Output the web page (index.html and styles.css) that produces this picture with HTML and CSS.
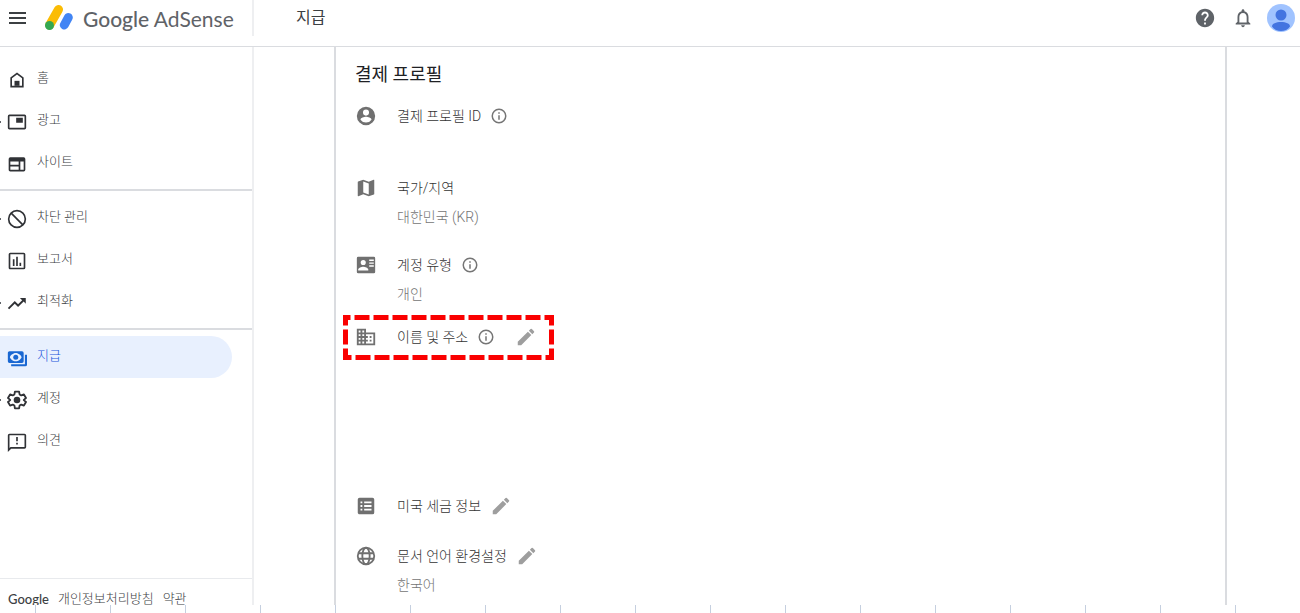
FILE: index.html
```html
<!DOCTYPE html>
<html lang="ko">
<head>
    <meta charset="UTF-8">
    <meta name="viewport" content="width=device-width, initial-scale=1.0">
    <title>Google AdSense - 지급</title>
    <link rel="stylesheet" href="styles.css">
</head>
<body>
    <header class="header">
        <div class="brand">
            <button class="icon-button" aria-label="메뉴">
                <svg class="menu-icon" viewBox="0 0 18 14"><path d="M0 1h17v2H0zM0 6h17v2H0zM0 11h17v2H0z"/></svg>
            </button>
            <a class="logo" href="#">
                <svg class="logo-mark" viewBox="0 0 28 26">
                    <path d="M13.500 4.500 4.700 20" stroke="#fbbc04" stroke-width="9" stroke-linecap="round"/>
                    <path d="M23.300 12.500 19.300 20" stroke="#4285f4" stroke-width="9" stroke-linecap="round"/>
                    <circle cx="4.500" cy="20.500" r="4.500" fill="#34a853"/>
                </svg>
                <span class="logo-text"><b>Google</b> AdSense</span>
            </a>
        </div>
        <h1>지급</h1>
        <div class="header-actions">
            <button class="icon-button" aria-label="도움말">
                <svg class="icon" viewBox="0 0 24 24"><path d="M12 2C6.480 2 2 6.480 2 12s4.480 10 10 10 10-4.480 10-10S17.520 2 12 2zm1 17h-2v-2h2v2zm2.070-7.750-.9.920C13.450 12.900 13 13.500 13 15h-2v-.5c0-1.100.45-2.100 1.170-2.830l1.240-1.260c.37-.36.59-.86.59-1.410 0-1.100-.9-2-2-2s-2 .9-2 2H8c0-2.210 1.790-4 4-4s4 1.790 4 4c0 .88-.36 1.680-.93 2.250z"/></svg>
            </button>
            <button class="icon-button" aria-label="알림">
                <svg class="icon" viewBox="0 0 24 24"><path d="M12 22c1.100 0 2-.9 2-2h-4c0 1.100.9 2 2 2zm6-6v-5c0-3.070-1.630-5.640-4.500-6.320V4c0-.83-.67-1.500-1.500-1.500s-1.500.67-1.500 1.500v.68C7.640 5.360 6 7.920 6 11v5l-2 2v1h16v-1l-2-2zm-2 1H8v-6c0-2.480 1.510-4.500 4-4.500s4 2.020 4 4.500v6z"/></svg>
            </button>
            <button class="icon-button" aria-label="계정">
                <svg class="avatar" viewBox="0 0 28 28">
                    <circle cx="14" cy="14" r="14" fill="#a0c3ff"/>
                    <circle cx="14" cy="11" r="5.500" fill="#4374e0"/>
                    <path d="M5 22.500c0-3 4-4.500 9-4.500s9 1.500 9 4.500c-2 3-5.500 4.500-9 4.500s-7-1.500-9-4.500z" fill="#4374e0"/>
                </svg>
            </button>
        </div>
    </header>

    <div class="page">
        <aside class="sidebar">
            <nav>
                <ul class="nav-group">
                    <li><a href="#"><svg class="icon" viewBox="0 0 24 24"><path d="M12 3 4 9v12h16V9l-8-6zm6 16H6v-9l6-4.500 6 4.500v9z"/><path d="M9 13h6v6H9z"/></svg><span>홈</span></a></li>
                    <li><a class="has-sub" href="#"><svg class="icon" viewBox="0 0 24 24"><path d="M21 3H3a2 2 0 0 0-2 2v14c0 1.100.9 2 2 2h18a2 2 0 0 0 2-2V5a2 2 0 0 0-2-2zm0 16H3V5h18v14zM11 7h8v6h-8z"/></svg><span>광고</span></a></li>
                    <li><a href="#"><svg class="icon" viewBox="0 0 24 24"><path d="M20 4H4a2 2 0 0 0-2 2v13c0 1.100.9 2 2 2h16a2 2 0 0 0 2-2V6a2 2 0 0 0-2-2zM4 9h10v4H4V9zm0 6h10v4H4v-4zm16 4h-4V9h4v10z"/></svg><span>사이트</span></a></li>
                </ul>
                <ul class="nav-group">
                    <li><a class="has-sub" href="#"><svg class="icon" viewBox="0 0 24 24"><g fill="none" stroke="currentColor" stroke-width="2"><circle cx="12" cy="12" r="10"/><path d="m5 5 14 14"/></g></svg><span>차단 관리</span></a></li>
                    <li><a href="#"><svg class="icon" viewBox="0 0 24 24"><path d="M20 2H4a2 2 0 0 0-2 2v16c0 1.100.9 2 2 2h16a2 2 0 0 0 2-2V4a2 2 0 0 0-2-2zm0 18H4V4h16v16zM7 10h2v8H7zM11 7h2v11h-2zM15 14h2v4h-2z"/></svg><span>보고서</span></a></li>
                    <li><a class="has-sub" href="#"><svg class="icon" viewBox="0 0 24 24"><path d="M15.500 6l2.700 2.700-4.900 4.900-4-4L1 18l1.600 1.600 6.700-6.800 4 4 6.700-6.500L22.500 13V6z"/></svg><span>최적화</span></a></li>
                </ul>
                <ul class="nav-group">
                    <li><a class="active" href="#"><svg class="icon" viewBox="0 0 24 24"><path fill-rule="evenodd" d="M3 4h15a2 2 0 0 1 2 2v10a2 2 0 0 1-2 2H3a2 2 0 0 1-2-2V6c0-1.100.9-2 2-2zm7.500 2C7 6 4 9 3.500 11c.5 2 3.500 5 7 5s6.500-3 7-5c-.5-2-3.500-5-7-5z"/><circle cx="10.500" cy="11" r="3"/><path d="M21.500 8H24v12a2 2 0 0 1-2 2H5v-2.500h16.500z"/></svg><span>지급</span></a></li>
                    <li><a class="has-sub" href="#"><svg class="icon" viewBox="0 0 24 24"><path d="M9.500 2h5l.6 3.300 2 1.200 3.200-1.200 2.500 4.300-2.600 2.200v.4l2.600 2.200-2.500 4.300-3.200-1.200-2 1.200-.6 3.300h-5l-.6-3.300-2-1.200-3.200 1.200-2.500-4.300 2.600-2.200v-.4L1.200 9.600l2.500-4.300 3.200 1.200 2-1.200z" fill="none" stroke="currentColor" stroke-width="2.200" stroke-linejoin="round"/><circle cx="12" cy="12" r="4"/></svg><span>계정</span></a></li>
                    <li><a href="#"><svg class="icon" viewBox="0 0 24 24"><path d="M21 2H3a2 2 0 0 0-2 2v20l4-4h16a2 2 0 0 0 2-2V4a2 2 0 0 0-2-2zm0 16H4.200L3 19.200V4h18v14zM11 6h2v5h-2zM11 13h2v2h-2z"/></svg><span>의견</span></a></li>
                </ul>
            </nav>
            <footer class="sidebar-footer">
                <span class="footer-logo">Google</span>
                <a href="#">개인정보처리방침</a>
                <a href="#">약관</a>
            </footer>
        </aside>

        <main class="content">
            <section class="card">
                <h2>결제 프로필</h2>

                <div class="field field-id">
                    <svg class="icon" viewBox="0 0 24 24"><path d="M12 2a10 10 0 1 0 0 20 10 10 0 0 0 0-20zm0 3a3.300 3.300 0 1 1 0 6.600A3.300 3.300 0 0 1 12 5zm0 14.200a7.200 7.200 0 0 1-6-3.200c0-2 4-3.100 6-3.100s6 1.100 6 3.100a7.200 7.200 0 0 1-6 3.200z"/></svg>
                    <div class="field-label"><span>결제 프로필 ID</span>
                        <button class="icon-button" aria-label="정보"><svg class="info" viewBox="0 0 24 24"><path d="M11 17h2v-6h-2v6zm1-15a10 10 0 1 0 0 20 10 10 0 0 0 0-20zm0 18a8 8 0 1 1 0-16 8 8 0 0 1 0 16zM11 9h2V7h-2v2z"/></svg></button>
                    </div>
                </div>

                <div class="field field-country">
                    <svg class="icon" viewBox="0 0 24 24"><path d="m20.500 3-.2.100L15 5.100 9 3 3.400 4.900c-.2.100-.4.300-.4.500v15.100c0 .3.200.5.500.5l.2-.1L9 18.900l6 2.100 5.600-1.900c.2-.1.400-.3.400-.5V3.500c0-.3-.2-.5-.5-.5zM15 19l-6-2.100V5l6 2.100V19z"/></svg>
                    <div class="field-label"><span>국가/지역</span></div>
                    <div class="field-value">대한민국 (KR)</div>
                </div>

                <div class="field field-type">
                    <svg class="icon" viewBox="0 0 24 24"><path fill-rule="evenodd" d="M20.500 3h-17A1.500 1.500 0 0 0 2 4.500v15A1.500 1.500 0 0 0 3.500 21h17a1.500 1.500 0 0 0 1.500-1.500v-15A1.500 1.500 0 0 0 20.500 3zM9 6.500a2.800 2.800 0 1 1 0 5.600 2.800 2.800 0 0 1 0-5.600zM14.500 18h-11v-1c0-2 3.500-3.100 5.500-3.100s5.500 1.100 5.500 3.100v1zM20.500 7.500h-5V6h5v1.500zm0 3.200h-5V9.200h5v1.500zm0 3.200h-5v-1.500h5v1.500z"/></svg>
                    <div class="field-label"><span>계정 유형</span>
                        <button class="icon-button" aria-label="정보"><svg class="info" viewBox="0 0 24 24"><path d="M11 17h2v-6h-2v6zm1-15a10 10 0 1 0 0 20 10 10 0 0 0 0-20zm0 18a8 8 0 1 1 0-16 8 8 0 0 1 0 16zM11 9h2V7h-2v2z"/></svg></button>
                    </div>
                    <div class="field-value">개인</div>
                </div>

                <div class="field field-address">
                    <svg class="icon" viewBox="0 0 24 24"><path d="M12 7V3H2v18h20V7H12zM6 19H4v-2h2v2zm0-4H4v-2h2v2zm0-4H4V9h2v2zm0-4H4V5h2v2zm4 12H8v-2h2v2zm0-4H8v-2h2v2zm0-4H8V9h2v2zm0-4H8V5h2v2zm10 12h-8v-2h2v-2h-2v-2h2v-2h-2V9h8v10zm-2-8h-2v2h2v-2zm0 4h-2v2h2v-2z"/></svg>
                    <div class="field-label"><span>이름 및 주소</span>
                        <button class="icon-button" aria-label="정보"><svg class="info" viewBox="0 0 24 24"><path d="M11 17h2v-6h-2v6zm1-15a10 10 0 1 0 0 20 10 10 0 0 0 0-20zm0 18a8 8 0 1 1 0-16 8 8 0 0 1 0 16zM11 9h2V7h-2v2z"/></svg></button>
                        <button class="icon-button edit" aria-label="수정"><svg class="icon" viewBox="0 0 24 24"><path d="M3 17.250V21h3.750L17.810 9.940l-3.750-3.750L3 17.250zM20.710 7.040a1 1 0 0 0 0-1.410l-2.340-2.340a1 1 0 0 0-1.410 0l-1.830 1.830 3.750 3.750 1.830-1.830z"/></svg></button>
                    </div>
                    <svg class="highlight" viewBox="0 0 211 45"><rect x="2.500" y="2.500" width="206" height="40" fill="none" stroke="#fa0000" stroke-width="5" stroke-dasharray="15 4" stroke-dashoffset="10"/></svg>
                </div>

                <div class="field field-tax">
                    <svg class="icon" viewBox="0 0 24 24"><path fill-rule="evenodd" d="M19 3H5a2 2 0 0 0-2 2v14c0 1.100.9 2 2 2h14a2 2 0 0 0 2-2V5a2 2 0 0 0-2-2zM6 7h2v2H6zM10 7h8v2h-8zM6 11h2v2H6zM10 11h8v2h-8zM6 15h2v2H6zM10 15h8v2h-8z"/></svg>
                    <div class="field-label"><span>미국 세금 정보</span>
                        <button class="icon-button edit" aria-label="수정"><svg class="icon" viewBox="0 0 24 24"><path d="M3 17.250V21h3.750L17.810 9.940l-3.750-3.750L3 17.250zM20.710 7.040a1 1 0 0 0 0-1.410l-2.340-2.340a1 1 0 0 0-1.410 0l-1.830 1.830 3.750 3.750 1.830-1.830z"/></svg></button>
                    </div>
                </div>

                <div class="field">
                    <svg class="icon" viewBox="0 0 24 24"><g fill="none" stroke="currentColor" stroke-width="2"><circle cx="12" cy="12" r="9"/><ellipse cx="12" cy="12" rx="4" ry="9"/><path d="M3.500 9h17M3.500 15h17"/></g></svg>
                    <div class="field-label"><span>문서 언어 환경설정</span>
                        <button class="icon-button edit" aria-label="수정"><svg class="icon" viewBox="0 0 24 24"><path d="M3 17.250V21h3.750L17.810 9.940l-3.750-3.750L3 17.250zM20.710 7.040a1 1 0 0 0 0-1.410l-2.340-2.340a1 1 0 0 0-1.410 0l-1.830 1.830 3.750 3.750 1.830-1.830z"/></svg></button>
                    </div>
                    <div class="field-value">한국어</div>
                </div>
            </section>
        </main>
    </div>

    <div class="ruler"></div>
</body>
</html>
```

FILE: styles.css
```css
* {
    margin: 0;
    padding: 0;
    box-sizing: border-box;
}

body {
    display: flex;
    flex-direction: column;
    height: 100vh;
    overflow: hidden;
    background-color: #fff;
    color: #5f6368;
    font-family: Roboto, 'Noto Sans CJK KR', sans-serif;
    font-size: 14px;
    font-weight: 300;
}

a {
    color: inherit;
    text-decoration: none;
}

svg {
    display: block;
    fill: currentColor;
    flex-shrink: 0;
}

.icon-button {
    background: transparent;
    border: none;
    color: inherit;
    cursor: pointer;
}

.icon {
    width: 22px;
    height: 22px;
}

/* header */
.header {
    display: flex;
    flex-shrink: 0;
    align-items: flex-start;
    height: 47px;
    border-bottom: 1px solid #dadce0;
}

.brand {
    display: flex;
    align-items: center;
    width: 254px;
    height: 36px;
    padding-left: 9px;
    border-right: 2px solid #eeeff1;
}

.menu-icon {
    width: 18px;
    height: 14px;
    color: #3c4043;
}

.logo {
    display: flex;
    align-items: center;
    gap: 10px;
    margin-left: 18px;
}

.logo-mark {
    width: 28px;
    height: 26px;
    fill: none;
}

.logo-text {
    padding-top: 2px;
    color: #5f6368;
    font-family: Lato, sans-serif;
    font-size: 21px;
    font-weight: 400;
    line-height: 36px;
    white-space: nowrap;
}

.logo-text b {
    font-weight: 500;
}

.header h1 {
    margin-left: 42px;
    color: #3c4043;
    font-size: 16px;
    font-weight: 400;
    line-height: 36px;
}

.header-actions {
    display: flex;
    align-items: center;
    gap: 10px;
    height: 36px;
    margin-left: auto;
    padding-right: 5px;
}

.header-actions .icon-button {
    display: flex;
    justify-content: center;
    width: 28px;
}

.avatar {
    width: 28px;
    height: 28px;
}

/* sidebar */
.page {
    display: flex;
    flex: 1;
    min-height: 0;
}

.sidebar {
    display: flex;
    flex-direction: column;
    flex-shrink: 0;
    justify-content: space-between;
    width: 254px;
    padding-top: 5px;
    border-right: 2px solid #eeeff1;
}

.nav-group {
    padding: 6px 0 5px;
    list-style: none;
}

.nav-group + .nav-group {
    border-top: 2px solid #dadce0;
}

.nav-group a {
    position: relative;
    display: flex;
    align-items: center;
    gap: 10px;
    height: 42px;
    margin-right: 20px;
    padding: 2px 0 0 7px;
    border-radius: 0 21px 21px 0;
    color: #3c4043;
    font-size: 13px;
}

.nav-group .icon {
    width: 20px;
    height: 20px;
    color: #303236;
}

.nav-group span {
    padding-bottom: 8px;
}

/* tip of the expand arrow */
.has-sub::before {
    position: absolute;
    left: 0;
    width: 1px;
    height: 2px;
    background-color: #5f6368;
    content: "";
}

.nav-group .active {
    background-color: #e8f0fe;
    color: #1a56db;
}

.nav-group .active .icon {
    color: #1967d2;
}

.sidebar-footer {
    display: flex;
    gap: 9px;
    height: 27px;
    padding-left: 8px;
    overflow: hidden;
    border-top: 1px solid #e8eaed;
    color: #3c4043;
    font-size: 13px;
    line-height: 40px;
}

.footer-logo {
    font-family: Lato, sans-serif;
    font-weight: 500;
}

/* payments profile */
.content {
    flex: 1;
    padding: 0 73px 0 80px;
    overflow: hidden;
}

.card {
    height: 100%;
    padding: 14px 19px 0;
    border: solid #dadce0;
    border-width: 0 2px;
}

.card h2 {
    margin-bottom: 13px;
    color: #202124;
    font-size: 18px;
    font-weight: 400;
    line-height: 28px;
}

.field {
    position: relative;
    display: grid;
    grid-template-columns: 22px 1fr;
    grid-auto-rows: max-content;
    column-gap: 20px;
    align-items: center;
    color: #707070;
}

.field-label {
    display: flex;
    align-items: center;
    gap: 9px;
    height: 28px;
    color: #333;
}

.field-label span {
    padding-bottom: 2px;
}

.field-value {
    grid-column: 2;
    color: #757575;
    line-height: 30px;
}

.info {
    width: 18px;
    height: 18px;
    color: #757575;
}

.edit {
    color: #9e9e9e;
}

.icon-button + .edit {
    margin-left: 11px;
}

.field-id,
.field-type {
    min-height: 72px;
}

.field-country {
    min-height: 77px;
}

.field-address {
    min-height: 169px;
}

.field-tax {
    min-height: 50px;
}

.highlight {
    position: absolute;
    top: -8px;
    left: -12px;
    width: 211px;
    height: 45px;
    pointer-events: none;
}

/* tick marks along the bottom edge */
.ruler {
    flex-shrink: 0;
    height: 8px;
    margin-left: 35px;
    background: repeating-linear-gradient(to right, #c5cfdf 0 1px, transparent 1px 75px);
}
```
